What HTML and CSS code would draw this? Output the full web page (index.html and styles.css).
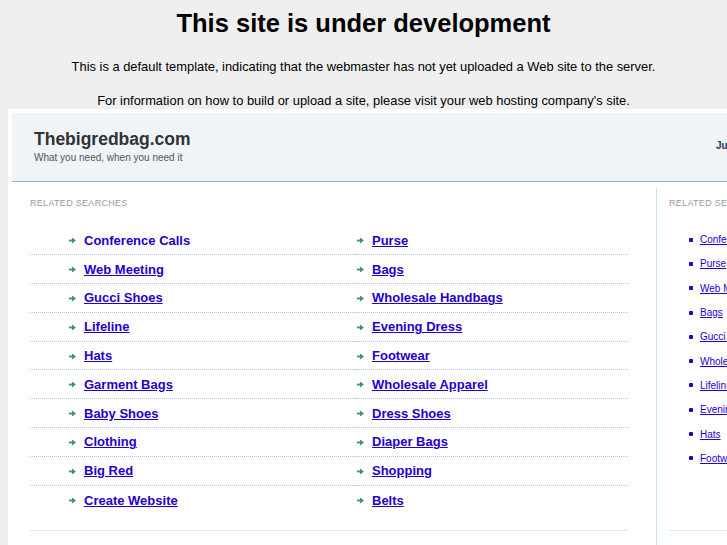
FILE: index.html
```html
<!DOCTYPE html>
<html>
<head>
<meta charset="utf-8">
<title>This site is under development</title>
<link rel="stylesheet" href="styles.css">
</head>
<body>
<div class="notice">
  <h1 class="notice-title">This site is under development</h1>
  <p class="notice-text first">This is a default template, indicating that the webmaster has not yet uploaded a Web site to the server.</p>
  <p class="notice-text">For information on how to build or upload a site, please visit your web hosting company's site.</p>
</div>
<div class="frame">
  <div class="frame-inner">
    <div class="header">
      <div class="brand">
        <div class="brand-name">Thebigredbag.com</div>
        <div class="brand-tag">What you need, when you need it</div>
      </div>
      <div class="date">June 2011</div>
    </div>
    <div class="main">
      <div class="primary">
        <div class="section-label">Related Searches</div>
        <ul class="links">
          <li class="link-item"><span class="arrow"><svg width="7" height="7" viewBox="0 0 7 7"><rect x="0" y="2.6" width="4" height="1.8" fill="#3f8c82"/><polygon points="3,0.5 7,3.5 3,6.5" fill="#3f8c82"/></svg></span><a href="#" class="link plain">Conference Calls</a></li>
          <li class="link-item right"><span class="arrow"><svg width="7" height="7" viewBox="0 0 7 7"><rect x="0" y="2.6" width="4" height="1.8" fill="#3f8c82"/><polygon points="3,0.5 7,3.5 3,6.5" fill="#3f8c82"/></svg></span><a href="#" class="link">Purse</a></li>
          <li class="link-item"><span class="arrow"><svg width="7" height="7" viewBox="0 0 7 7"><rect x="0" y="2.6" width="4" height="1.8" fill="#3f8c82"/><polygon points="3,0.5 7,3.5 3,6.5" fill="#3f8c82"/></svg></span><a href="#" class="link">Web Meeting</a></li>
          <li class="link-item right"><span class="arrow"><svg width="7" height="7" viewBox="0 0 7 7"><rect x="0" y="2.6" width="4" height="1.8" fill="#3f8c82"/><polygon points="3,0.5 7,3.5 3,6.5" fill="#3f8c82"/></svg></span><a href="#" class="link">Bags</a></li>
          <li class="link-item"><span class="arrow"><svg width="7" height="7" viewBox="0 0 7 7"><rect x="0" y="2.6" width="4" height="1.8" fill="#3f8c82"/><polygon points="3,0.5 7,3.5 3,6.5" fill="#3f8c82"/></svg></span><a href="#" class="link">Gucci Shoes</a></li>
          <li class="link-item right"><span class="arrow"><svg width="7" height="7" viewBox="0 0 7 7"><rect x="0" y="2.6" width="4" height="1.8" fill="#3f8c82"/><polygon points="3,0.5 7,3.5 3,6.5" fill="#3f8c82"/></svg></span><a href="#" class="link">Wholesale Handbags</a></li>
          <li class="link-item"><span class="arrow"><svg width="7" height="7" viewBox="0 0 7 7"><rect x="0" y="2.6" width="4" height="1.8" fill="#3f8c82"/><polygon points="3,0.5 7,3.5 3,6.5" fill="#3f8c82"/></svg></span><a href="#" class="link">Lifeline</a></li>
          <li class="link-item right"><span class="arrow"><svg width="7" height="7" viewBox="0 0 7 7"><rect x="0" y="2.6" width="4" height="1.8" fill="#3f8c82"/><polygon points="3,0.5 7,3.5 3,6.5" fill="#3f8c82"/></svg></span><a href="#" class="link">Evening Dress</a></li>
          <li class="link-item"><span class="arrow"><svg width="7" height="7" viewBox="0 0 7 7"><rect x="0" y="2.6" width="4" height="1.8" fill="#3f8c82"/><polygon points="3,0.5 7,3.5 3,6.5" fill="#3f8c82"/></svg></span><a href="#" class="link">Hats</a></li>
          <li class="link-item right"><span class="arrow"><svg width="7" height="7" viewBox="0 0 7 7"><rect x="0" y="2.6" width="4" height="1.8" fill="#3f8c82"/><polygon points="3,0.5 7,3.5 3,6.5" fill="#3f8c82"/></svg></span><a href="#" class="link">Footwear</a></li>
          <li class="link-item"><span class="arrow"><svg width="7" height="7" viewBox="0 0 7 7"><rect x="0" y="2.6" width="4" height="1.8" fill="#3f8c82"/><polygon points="3,0.5 7,3.5 3,6.5" fill="#3f8c82"/></svg></span><a href="#" class="link">Garment Bags</a></li>
          <li class="link-item right"><span class="arrow"><svg width="7" height="7" viewBox="0 0 7 7"><rect x="0" y="2.6" width="4" height="1.8" fill="#3f8c82"/><polygon points="3,0.5 7,3.5 3,6.5" fill="#3f8c82"/></svg></span><a href="#" class="link">Wholesale Apparel</a></li>
          <li class="link-item"><span class="arrow"><svg width="7" height="7" viewBox="0 0 7 7"><rect x="0" y="2.6" width="4" height="1.8" fill="#3f8c82"/><polygon points="3,0.5 7,3.5 3,6.5" fill="#3f8c82"/></svg></span><a href="#" class="link">Baby Shoes</a></li>
          <li class="link-item right"><span class="arrow"><svg width="7" height="7" viewBox="0 0 7 7"><rect x="0" y="2.6" width="4" height="1.8" fill="#3f8c82"/><polygon points="3,0.5 7,3.5 3,6.5" fill="#3f8c82"/></svg></span><a href="#" class="link">Dress Shoes</a></li>
          <li class="link-item"><span class="arrow"><svg width="7" height="7" viewBox="0 0 7 7"><rect x="0" y="2.6" width="4" height="1.8" fill="#3f8c82"/><polygon points="3,0.5 7,3.5 3,6.5" fill="#3f8c82"/></svg></span><a href="#" class="link">Clothing</a></li>
          <li class="link-item right"><span class="arrow"><svg width="7" height="7" viewBox="0 0 7 7"><rect x="0" y="2.6" width="4" height="1.8" fill="#3f8c82"/><polygon points="3,0.5 7,3.5 3,6.5" fill="#3f8c82"/></svg></span><a href="#" class="link">Diaper Bags</a></li>
          <li class="link-item"><span class="arrow"><svg width="7" height="7" viewBox="0 0 7 7"><rect x="0" y="2.6" width="4" height="1.8" fill="#3f8c82"/><polygon points="3,0.5 7,3.5 3,6.5" fill="#3f8c82"/></svg></span><a href="#" class="link">Big Red</a></li>
          <li class="link-item right"><span class="arrow"><svg width="7" height="7" viewBox="0 0 7 7"><rect x="0" y="2.6" width="4" height="1.8" fill="#3f8c82"/><polygon points="3,0.5 7,3.5 3,6.5" fill="#3f8c82"/></svg></span><a href="#" class="link">Shopping</a></li>
          <li class="link-item last"><span class="arrow"><svg width="7" height="7" viewBox="0 0 7 7"><rect x="0" y="2.6" width="4" height="1.8" fill="#3f8c82"/><polygon points="3,0.5 7,3.5 3,6.5" fill="#3f8c82"/></svg></span><a href="#" class="link">Create Website</a></li>
          <li class="link-item right last"><span class="arrow"><svg width="7" height="7" viewBox="0 0 7 7"><rect x="0" y="2.6" width="4" height="1.8" fill="#3f8c82"/><polygon points="3,0.5 7,3.5 3,6.5" fill="#3f8c82"/></svg></span><a href="#" class="link">Belts</a></li>
        </ul>
        <div class="rule"></div>
      </div>
      <div class="secondary">
        <div class="section-label">Related Searches</div>
        <ul class="side-links">
          <li class="side-item"><a href="#" class="side-link">Conference Calls</a></li>
          <li class="side-item"><a href="#" class="side-link">Purse</a></li>
          <li class="side-item"><a href="#" class="side-link">Web Meeting</a></li>
          <li class="side-item"><a href="#" class="side-link">Bags</a></li>
          <li class="side-item"><a href="#" class="side-link">Gucci Shoes</a></li>
          <li class="side-item"><a href="#" class="side-link">Wholesale Handbags</a></li>
          <li class="side-item"><a href="#" class="side-link">Lifeline</a></li>
          <li class="side-item"><a href="#" class="side-link">Evening Dress</a></li>
          <li class="side-item"><a href="#" class="side-link">Hats</a></li>
          <li class="side-item"><a href="#" class="side-link">Footwear</a></li>
        </ul>
        <div class="rule side-rule"></div>
      </div>
    </div>
  </div>
</div>
</body>
</html>
```
FILE: styles.css
```css
html, body {
  margin: 0;
  padding: 0;
}
body {
  background: #efefef;
  font-family: "Liberation Sans", Arial, sans-serif;
  color: #000;
  overflow: hidden;
  height: 545px;
}
.notice {
  padding-top: 9px;
  text-align: center;
}
.notice-title {
  margin: 0;
  font-size: 25.5px;
  line-height: 29px;
  font-weight: bold;
}
.notice-text {
  margin: 19px 0 0;
  font-size: 12.9px;
  line-height: 15px;
}
.notice-text.first {
  margin-top: 20.5px;
}
.frame {
  margin: 1px 0 0 8px;
  width: 1000px;
  background: #fff;
}
.frame-inner {
  padding: 4px;
}
.header {
  display: flex;
  height: 69px;
  background: #eef4f7;
  border-bottom: 1px solid #8eaee0;
  box-sizing: border-box;
}
.brand {
  flex: 0 0 704px;
  box-sizing: border-box;
  padding: 16px 0 0 22px;
}
.brand-name {
  font-size: 17.5px;
  line-height: 20px;
  font-weight: bold;
  color: #333;
}
.brand-tag {
  margin-top: 3px;
  font-size: 10px;
  line-height: 12px;
  color: #555;
}
.date {
  padding-top: 27px;
  font-size: 10px;
  line-height: 12px;
  font-weight: bold;
  color: #333;
}
.main {
  display: flex;
  align-items: flex-start;
}
.primary {
  width: 598px;
  margin: 0 28px 0 18px;
  padding-top: 16px;
}
.section-label {
  font-size: 9px;
  line-height: 11px;
  text-transform: uppercase;
  letter-spacing: 0.3px;
  color: #9a9a9a;
}
.links {
  list-style: none;
  margin: 18px 0 0;
  padding: 0;
  display: grid;
  grid-template-columns: 327px 271px;
}
.link-item {
  display: flex;
  align-items: center;
  height: 28.8px;
  box-sizing: border-box;
  padding-left: 39px;
  border-bottom: 1px dotted #a9c6ec;
}
.link-item.right {
  padding-left: 0;
}
.link-item.last {
  border-bottom: none;
}
.arrow {
  display: flex;
  width: 15px;
  padding-top: 1px;
}
.link {
  font-size: 13px;
  font-weight: bold;
  color: #2400cc;
  text-decoration: underline;
}
.link.plain {
  text-decoration: none;
}
.rule {
  margin-top: 16px;
  border-top: 1px solid #d9e6f7;
}
.secondary {
  width: 300px;
  margin-top: 6px;
  padding: 10px 0 0 12px;
  border-left: 1px solid #cddff5;
  min-height: 360px;
}
.side-links {
  list-style: none;
  margin: 19px 0 0;
  padding: 0 0 0 20px;
}
.side-item {
  display: flex;
  align-items: center;
  height: 24.3px;
}
.side-item::before {
  content: "";
  width: 4px;
  height: 4px;
  border-radius: 1px;
  background: #2400cc;
  margin-right: 7px;
}
.side-link {
  font-size: 10px;
  color: #2400cc;
  text-decoration: underline;
}
.side-rule {
  margin-top: 60px;
}
```
